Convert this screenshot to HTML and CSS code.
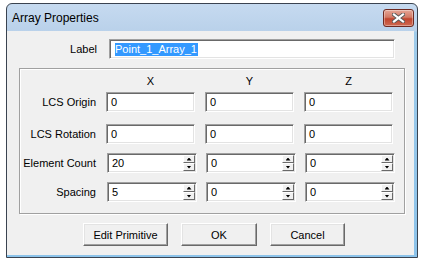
FILE: index.html
```html
<!DOCTYPE html>
<html>
<head>
<meta charset="utf-8">
<link rel="stylesheet" href="styles.css">
</head>
<body>
<div class="window">
  <div class="titlebar">
    <span class="title">Array Properties</span>
    <div class="close">
      <svg width="13" height="10" viewBox="0 0 13 10">
        <path d="M2 1.5 L11 8.5 M11 1.5 L2 8.5" stroke="#5a5a5a" stroke-width="4" stroke-linecap="square"/>
        <path d="M2 1.5 L11 8.5 M11 1.5 L2 8.5" stroke="#ffffff" stroke-width="2.2" stroke-linecap="square"/>
      </svg>
    </div>
  </div>
  <div class="client">
    <div class="label-row">
      <span class="lbl">Label</span>
      <div class="field wide"><span class="sel">Point_1_Array_1</span></div>
    </div>
    <div class="group">
      <div class="grid head">
        <span></span><span class="hd">X</span><span class="hd">Y</span><span class="hd">Z</span>
      </div>
      <div class="grid row r1">
        <span class="rl">LCS Origin</span>
        <div class="field">0</div><div class="field">0</div><div class="field">0</div>
      </div>
      <div class="grid row r2">
        <span class="rl">LCS Rotation</span>
        <div class="field">0</div><div class="field">0</div><div class="field">0</div>
      </div>
      <div class="grid row r3">
        <span class="rl">Element Count</span>
        <div class="spin"><span class="val">20</span><span class="arrows"><i class="up"></i><i class="down"></i></span></div>
        <div class="spin"><span class="val">0</span><span class="arrows"><i class="up"></i><i class="down"></i></span></div>
        <div class="spin"><span class="val">0</span><span class="arrows"><i class="up"></i><i class="down"></i></span></div>
      </div>
      <div class="grid row r3">
        <span class="rl">Spacing</span>
        <div class="spin"><span class="val">5</span><span class="arrows"><i class="up"></i><i class="down"></i></span></div>
        <div class="spin"><span class="val">0</span><span class="arrows"><i class="up"></i><i class="down"></i></span></div>
        <div class="spin"><span class="val">0</span><span class="arrows"><i class="up"></i><i class="down"></i></span></div>
      </div>
    </div>
    <div class="buttons">
      <button class="btn b1">Edit Primitive</button>
      <button class="btn b2">OK</button>
      <button class="btn b3">Cancel</button>
    </div>
  </div>
</div>
</body>
</html>
```
FILE: styles.css
```css
* { box-sizing: border-box; }
body {
  margin: 0;
  background: #fff;
  font-family: "Liberation Sans", Arial, sans-serif;
  font-size: 11px;
  color: #000;
}
.window {
  margin: 3px 0 0 6px;
  width: 412px;
  height: 255px;
  border: 1px solid #3a4350;
  border-radius: 6px 6px 0 0;
  background: linear-gradient(#c6daf0, #b9d1ea 27px, #9fcbea 28px, #8cc3ea);
  display: flex;
  flex-direction: column;
  overflow: hidden;
}
.titlebar {
  height: 27px;
  flex: none;
  display: flex;
  align-items: center;
  justify-content: space-between;
  padding: 0 3px 0 5px;
}
.title {
  font-size: 12px;
  color: #000;
  margin-top: 1px;
}
.close {
  width: 31px;
  height: 18px;
  border: 1px solid #6e2a22;
  border-radius: 3px;
  background: linear-gradient(#e6a696, #d27a66 45%, #c1452e 55%, #cf6a52);
  box-shadow: inset 0 0 0 1px rgba(255,255,255,0.35);
  display: flex;
  align-items: center;
  justify-content: center;
}
.client {
  flex: 1;
  background: #f0f0f0;
  margin: 0 3px 2px 0;
  padding-top: 8px;
}
.label-row {
  display: flex;
  align-items: center;
  height: 20px;
}
.lbl {
  width: 90px;
  text-align: right;
}
.field {
  height: 20px;
  background: #fff;
  border: 1px solid;
  border-color: #a0a0a0 #fff #fff #a0a0a0;
  box-shadow: inset 1px 1px #696969, inset -1px -1px #e3e3e3;
  padding: 0 0 0 4px;
  display: flex;
  align-items: center;
}
.wide {
  margin-left: 12px;
  width: 286px;
  padding-left: 5px;
}
.sel {
  background: #3399ff;
  color: #fff;
  line-height: 13px;
  padding-right: 1px;
}
.group {
  margin: 9px 0 0 12px;
  width: 386px;
  height: 146px;
  border: 1px solid #a0a0a0;
  box-shadow: inset 1px 1px #fff, 1px 1px #fff;
  padding-top: 6px;
}
.grid {
  display: grid;
  grid-template-columns: 76px 89px 89px 89px;
  column-gap: 10px;
}
.head { height: 13px; line-height: 13px; }
.hd { text-align: center; }
.row { height: 20px; align-items: center; }
.r1 { margin-top: 4px; }
.r2 { margin-top: 12px; }
.r3 { margin-top: 9px; }
.rl { text-align: right; white-space: nowrap; }
.spin {
  width: 90px;
  margin-left: 1px;
  height: 20px;
  background: #fff;
  border: 1px solid;
  border-color: #a0a0a0 #fff #fff #a0a0a0;
  box-shadow: inset 1px 1px #696969, inset -1px -1px #e3e3e3;
  display: flex;
  padding: 1px 1px 1px 1px;
}
.val {
  flex: 1;
  padding-left: 3px;
  display: flex;
  align-items: center;
}
.arrows {
  width: 12px;
  display: flex;
  flex-direction: column;
}
.arrows i {
  flex: 1;
  background: #f0f0f0;
  border: 1px solid;
  border-color: #fff #696969 #696969 #fff;
  display: flex;
  align-items: center;
  justify-content: center;
}
.arrows i::before {
  content: "";
  width: 5px;
  height: 3px;
  background: #000;
}
.up::before { clip-path: polygon(50% 0, 100% 100%, 0 100%); }
.down::before { clip-path: polygon(0 0, 100% 0, 50% 100%); }
.buttons {
  display: flex;
  gap: 13px;
  margin-top: 9px;
  padding-left: 76px;
}
.btn {
  height: 23px;
  font-family: inherit;
  font-size: 11px;
  color: #000;
  background: #f0f0f0;
  border: 1px solid;
  border-color: #fff #696969 #696969 #fff;
  box-shadow: inset -1px -1px #a0a0a0, inset 1px 1px #e3e3e3;
  padding: 0;
}
.b1 { width: 85px; }
.b2 { width: 76px; }
.b3 { width: 75px; }
```
